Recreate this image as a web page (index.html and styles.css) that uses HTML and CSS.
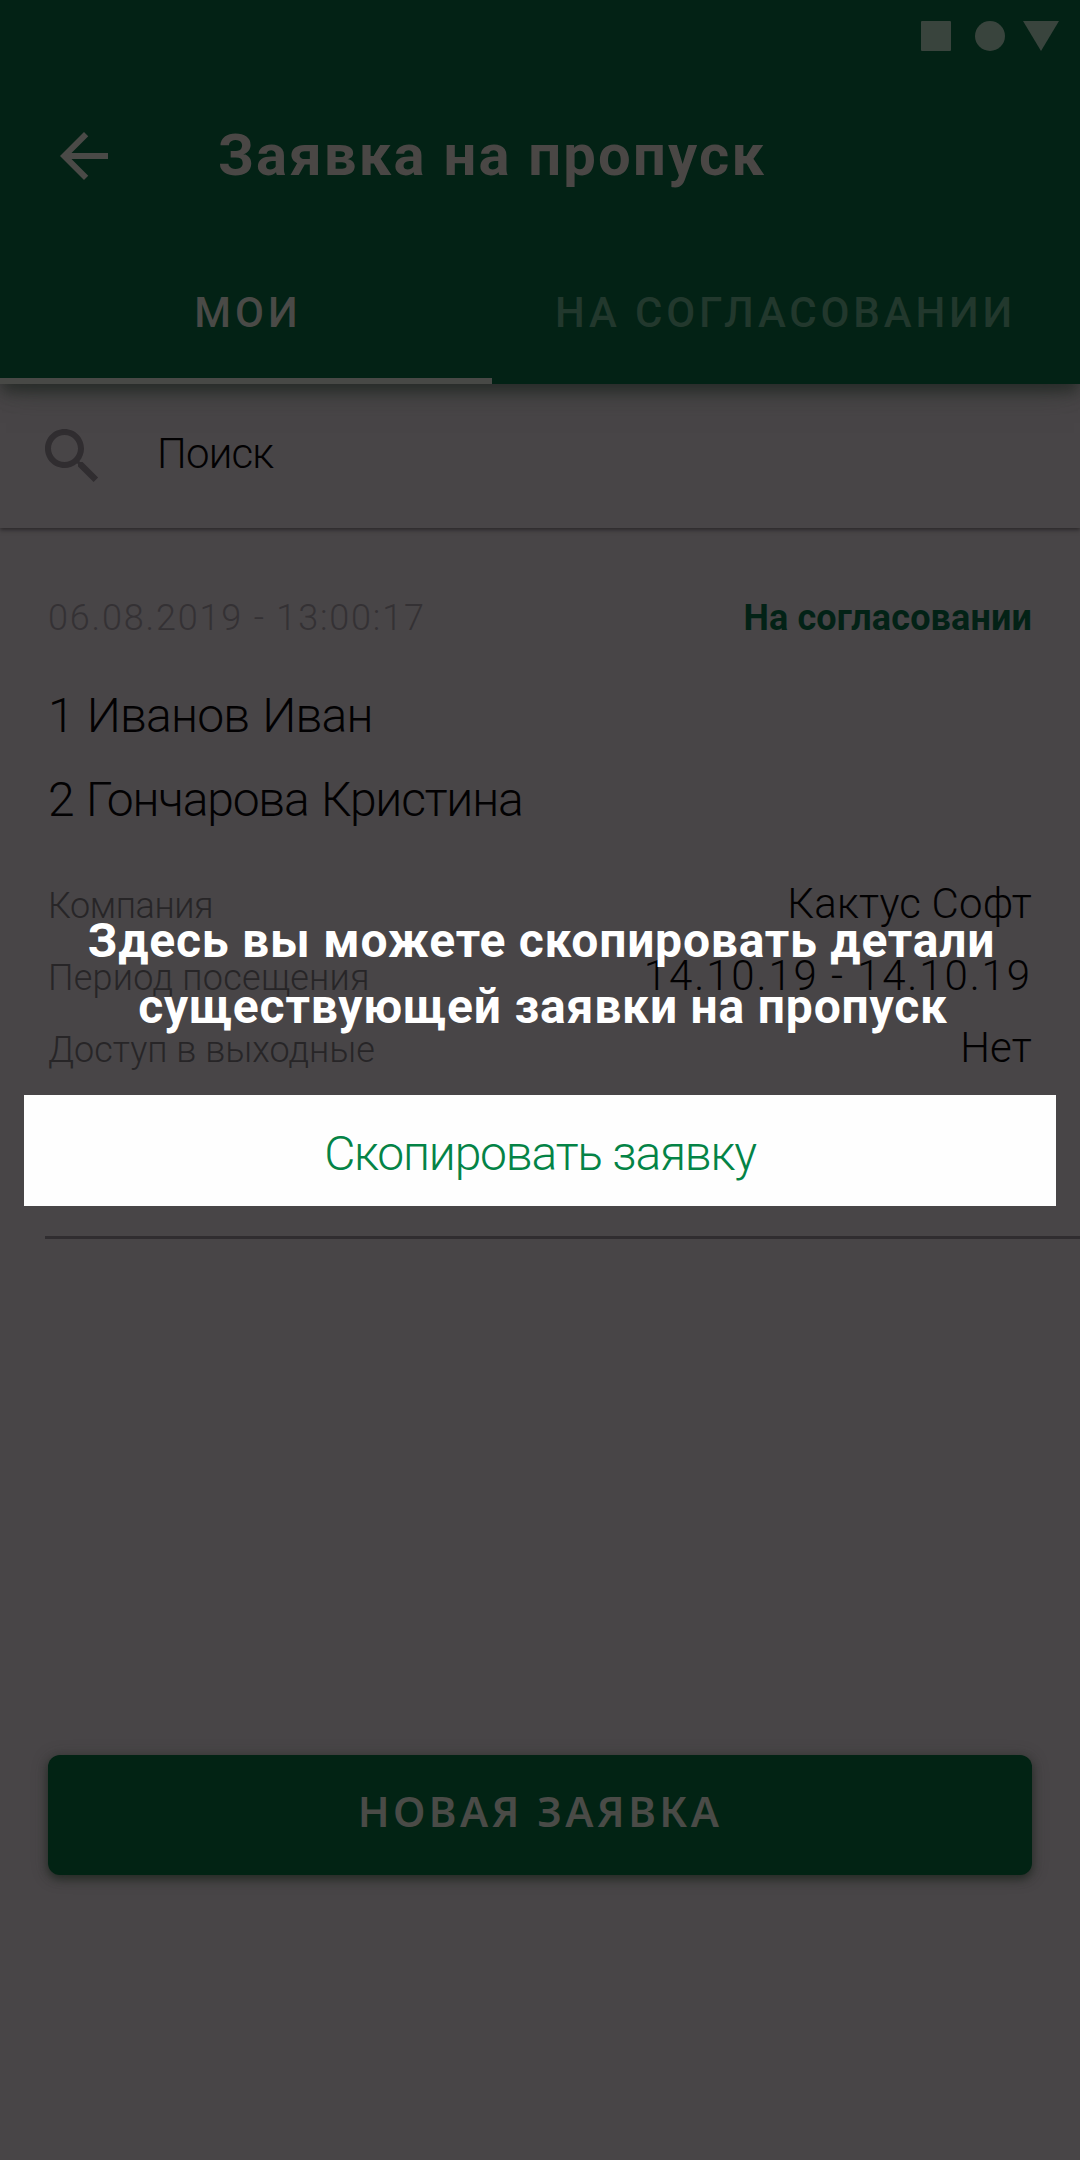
FILE: index.html
```html
<!DOCTYPE html>
<html lang="ru">
<head>
<meta charset="utf-8">
<title>Заявка на пропуск</title>
<link rel="stylesheet" href="styles.css">
</head>
<body>
<div class="screen">
  <header class="header">
    <div class="status-bar">
      <svg class="system-icons" width="138" height="30" viewBox="0 0 138 30">
        <rect x="0" y="0" width="30" height="30" rx="1"/>
        <circle cx="69" cy="15" r="15"/>
        <path d="M102 0h36l-18 30z"/>
      </svg>
    </div>
    <div class="app-bar">
      <svg class="back" width="72" height="72" viewBox="0 0 24 24"><path d="M20 11H7.83l5.59-5.59L12 4l-8 8 8 8 1.41-1.41L7.83 13H20v-2z"/></svg>
      <h1 class="title">Заявка на пропуск</h1>
    </div>
    <nav class="tabs">
      <div class="tab tab-active">МОИ</div>
      <div class="tab tab-pending">НА СОГЛАСОВАНИИ</div>
    </nav>
  </header>

  <div class="search">
    <svg class="search-icon" width="72" height="72" viewBox="0 0 24 24"><path d="M15.5 14h-.79l-.28-.27C15.41 12.59 16 11.11 16 9.5 16 5.91 13.09 3 9.5 3S3 5.91 3 9.5 5.91 16 9.5 16c1.61 0 3.09-.59 4.23-1.57l.27.28v.79l5.2 5.2L20.7 19.2l-5.2-5.2zm-6 0C7.01 14 5 11.99 5 9.5S7.01 5 9.5 5 14 7.01 14 9.5 11.99 14 9.5 14z"/></svg>
    <span class="search-text">Поиск</span>
  </div>

  <main class="request">
    <div class="request-head">
      <span class="date">06.08.2019 - 13:00:17</span>
      <span class="state">На согласовании</span>
    </div>
    <div class="visitors">
      <div class="visitor first">1 Иванов Иван</div>
      <div class="visitor second">2 Гончарова Кристина</div>
    </div>
    <div class="details">
      <div class="row"><span class="label company">Компания</span><span class="value">Кактус Софт</span></div>
      <div class="row"><span class="label period">Период посещения</span><span class="value dates">14.10.19 - 14.10.19</span></div>
      <div class="row"><span class="label">Доступ в выходные</span><span class="value">Нет</span></div>
      <div class="tip">
        <div class="tip-line">Здесь вы можете скопировать детали</div>
        <div class="tip-line tip-second">существующей заявки на пропуск</div>
      </div>
    </div>
    <div class="copy">Скопировать заявку</div>
    <div class="divider"></div>
  </main>

  <div class="create">НОВАЯ ЗАЯВКА</div>
</div>
</body>
</html>
```
FILE: styles.css
```css
* { box-sizing: border-box; }

body {
  margin: 0;
  background: #484547;
  font-family: Roboto, "Noto Sans", sans-serif;
  font-weight: 300;
  color: #020102;
}

.screen {
  width: 1080px;
  height: 2160px;
  display: flex;
  flex-direction: column;
  overflow: hidden;
  white-space: nowrap;
}

.header {
  position: relative;
  height: 384px;
  background: #032215;
  box-shadow: 0 10px 14px -2px rgba(32, 38, 34, .75), 0 4px 34px -6px rgba(48, 56, 50, .6);
}

.status-bar {
  height: 72px;
  padding: 21px 21px 0 0;
  display: flex;
  justify-content: flex-end;
}

.system-icons { fill: #39443d; }

.app-bar {
  height: 168px;
  padding-left: 48px;
  display: flex;
  align-items: center;
}

.back { fill: #4a4a47; }

.title {
  margin: 0 0 0 98px;
  padding-bottom: 3px;
  font-size: 58px;
  font-weight: 700;
  letter-spacing: 2.18px;
  color: #4a4745;
}

.tabs { display: flex; }

.tab {
  height: 144px;
  line-height: 145px;
  text-align: center;
  font-size: 42px;
  font-weight: 500;
}

.tab-active {
  width: 492px;
  padding-left: 4px;
  color: #4a4a47;
  letter-spacing: 4px;
  box-shadow: inset 0 -6px #484946;
}

.tab-pending {
  width: 588px;
  padding-right: 1px;
  color: #22382d;
  letter-spacing: 3.85px;
}

.search {
  height: 144px;
  padding-left: 36px;
  display: flex;
  align-items: center;
  box-shadow: 0 2px 4px #2b282a;
}

.search-icon { fill: #302d30; }

.search-text {
  margin-left: 49px;
  padding-bottom: 5px;
  font-size: 42px;
  letter-spacing: -.8px;
}

.request { padding-top: 66px; }

.request-head {
  height: 48px;
  line-height: 48px;
  padding: 0 48px;
  display: flex;
  justify-content: space-between;
  font-size: 36px;
}

.date { letter-spacing: 1.81px; color: #343134; }

.state {
  font-weight: 700;
  letter-spacing: .13px;
  color: #032216;
}

.visitors {
  padding: 32px 48px 0;
  font-size: 48px;
  line-height: 84px;
  word-spacing: 2px;
}

.first { letter-spacing: -.8px; }
.second { letter-spacing: -1.2px; }

.details {
  position: relative;
  margin-top: 26px;
  padding: 0 48px;
}

.row {
  height: 72px;
  display: flex;
  align-items: baseline;
  justify-content: space-between;
}

.label {
  font-size: 36px;
  line-height: 60px;
  color: #272527;
}

.company { letter-spacing: -.44px; }
.period { letter-spacing: .24px; }

.value {
  font-size: 42px;
  line-height: 72px;
  letter-spacing: .2px;
}

.dates { letter-spacing: 1.89px; }

/* Coach-mark text laid over the dimmed details */
.tip {
  position: absolute;
  left: 0;
  right: 0;
  top: 40px;
  padding-left: 3px;
  text-align: center;
  font-size: 48px;
  font-weight: 700;
  line-height: 66px;
  color: #fff;
}

.tip-line { letter-spacing: .78px; }
.tip-second { padding-left: 3px; letter-spacing: .81px; }

.copy {
  height: 111px;
  margin: 11px 24px 0;
  line-height: 117px;
  text-align: center;
  background: #fefefe;
  font-size: 48px;
  letter-spacing: -1.19px;
  color: #048346;
}

.divider {
  height: 3px;
  margin: 30px 0 0 45px;
  background: #302d30;
}

.create {
  height: 120px;
  margin: auto 48px 285px;
  border-radius: 12px;
  line-height: 112px;
  text-align: center;
  background: #022314;
  box-shadow: 0 4px 8px rgba(30, 38, 31, .75), 0 2px 16px rgba(40, 44, 40, .4);
  font-family: "Noto Sans", sans-serif;
  font-size: 42px;
  font-weight: 600;
  letter-spacing: 3.41px;
  color: #4a4b47;
}
```
